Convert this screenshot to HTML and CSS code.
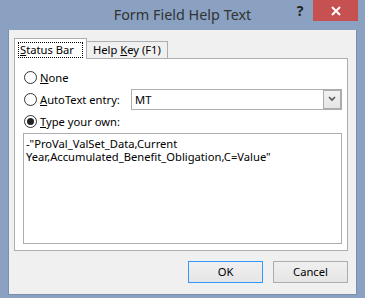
FILE: index.html
```html
<html><head>
<meta charset="UTF-8">
<title>Form Field Help Text</title>
<link rel="stylesheet" href="styles.css">
</head>
<body>
    <div class="window">
        <div class="titlebar">
            <div class="title">Form Field Help Text</div>
            <div class="help-btn">?</div>
            <div class="close-btn">
                <svg viewBox="0 0 10 10" width="10" height="10">
                    <path d="M1,1 L9,9 M9,1 L1,9" stroke="#fff" stroke-width="2"/>
                </svg>
            </div>
        </div>

        <div class="client">
            <div class="tabs">
                <div class="tab selected"><span class="focus"><u>S</u>tatus Bar</span></div>
                <div class="tab">Help <u>K</u>ey (F1)</div>
            </div>

            <div class="panel">
                <div class="option">
                    <span class="radio"></span>
                    <span><u>N</u>one</span>
                </div>
                <div class="option">
                    <span class="radio"></span>
                    <span class="label-auto"><u>A</u>utoText entry:</span>
                    <div class="combo">
                        <span class="combo-text">MT</span>
                        <span class="combo-btn">
                            <svg viewBox="0 0 8 6" width="8" height="6">
                                <path d="M1,1 L4,4 L7,1" fill="none" stroke="#555" stroke-width="1.6"/>
                            </svg>
                        </span>
                    </div>
                </div>
                <div class="option">
                    <span class="radio checked"></span>
                    <span><u>T</u>ype your own:</span>
                </div>
                <div class="textbox">-"ProVal_ValSet_Data,Current Year,Accumulated_Benefit_Obligation,C=Value"</div>
            </div>

            <div class="buttons">
                <div class="button default">OK</div>
                <div class="button">Cancel</div>
            </div>
        </div>
    </div>
</body></html>
```

FILE: styles.css
```css
* {
    margin: 0;
    padding: 0;
    box-sizing: border-box;
}

body {
    background: #8aa1c2;
    width: 365px;
    height: 298px;
    overflow: hidden;
    font-family: 'Noto Sans', 'DejaVu Sans', sans-serif;
    font-size: 11.2px;
    color: #000;
}

.window {
    display: flex;
    flex-direction: column;
    height: 298px;
}

.titlebar {
    height: 30px;
    display: flex;
    position: relative;
}

.title {
    flex: 1;
    text-align: center;
    font-size: 14.4px;
    line-height: 30px;
    color: #333;
}

.help-btn {
    position: absolute;
    left: 293px;
    top: 2px;
    width: 14px;
    font-size: 14px;
    font-weight: bold;
    color: #222;
    text-align: center;
    line-height: 18px;
}

.close-btn {
    position: absolute;
    left: 313px;
    top: 0;
    width: 45px;
    height: 21px;
    background: #c75050;
    display: flex;
    align-items: center;
    justify-content: center;
}

.client {
    margin: 0 8px 3px 8px;
    height: 265px;
    background: #f0f0f0;
    border: 1px solid #7a8fae;
    border-top: none;
    padding: 8px 8px 0 5px;
}

.tabs {
    display: flex;
    align-items: flex-end;
    height: 20px;
    position: relative;
    z-index: 1;
}

.tab {
    height: 17px;
    border: 1px solid #adadad;
    border-bottom: none;
    border-left: none;
    background: #f0f0f0;
    padding: 0 6px 0 6px;
    line-height: 15px;
    white-space: nowrap;
}

.tab.selected {
    height: 21px;
    width: 73px;
    border-left: 1px solid #adadad;
    background: #fff;
    padding: 3px 3px 0 3px;
    margin-bottom: -1px;
}

.focus {
    display: block;
    border: 1px dotted #000;
    padding: 0 0 0 1px;
    line-height: 14px;
    height: 16px;
}

.panel {
    background: #fff;
    border: 1px solid #adadad;
    height: 193px;
    padding: 7px 5px 0 8px;
}

.option {
    display: flex;
    align-items: center;
    height: 22px;
}

.radio {
    width: 13px;
    height: 13px;
    border: 1px solid #333;
    border-radius: 50%;
    background: #fff;
    margin-right: 3px;
    margin-left: 1px;
    display: flex;
    align-items: center;
    justify-content: center;
}

.radio.checked::after {
    content: '';
    width: 7px;
    height: 7px;
    border-radius: 50%;
    background: #222;
}

.label-auto {
    width: 91px;
}

.combo {
    flex: 1;
    height: 21px;
    border: 1px solid #abadb3;
    background: #fff;
    display: flex;
    align-items: center;
    padding-left: 3px;
}

.combo-text {
    flex: 1;
}

.combo-btn {
    width: 18px;
    height: 19px;
    border: 1px solid #acacac;
    background: linear-gradient(#f2f2f2, #e5e5e5);
    display: flex;
    align-items: center;
    justify-content: center;
}

.textbox {
    margin-top: 1px;
    height: 111px;
    border: 1px solid #abadb3;
    padding: 3px 2px;
    line-height: 13px;
}

.buttons {
    display: flex;
    justify-content: flex-end;
    gap: 10px;
    margin-top: 10px;
}

.button {
    width: 75px;
    height: 22px;
    border: 1px solid #adadad;
    background: linear-gradient(#f0f0f0, #e5e5e5);
    text-align: center;
    line-height: 20px;
}

.button.default {
    border-color: #3399ff;
}
```
